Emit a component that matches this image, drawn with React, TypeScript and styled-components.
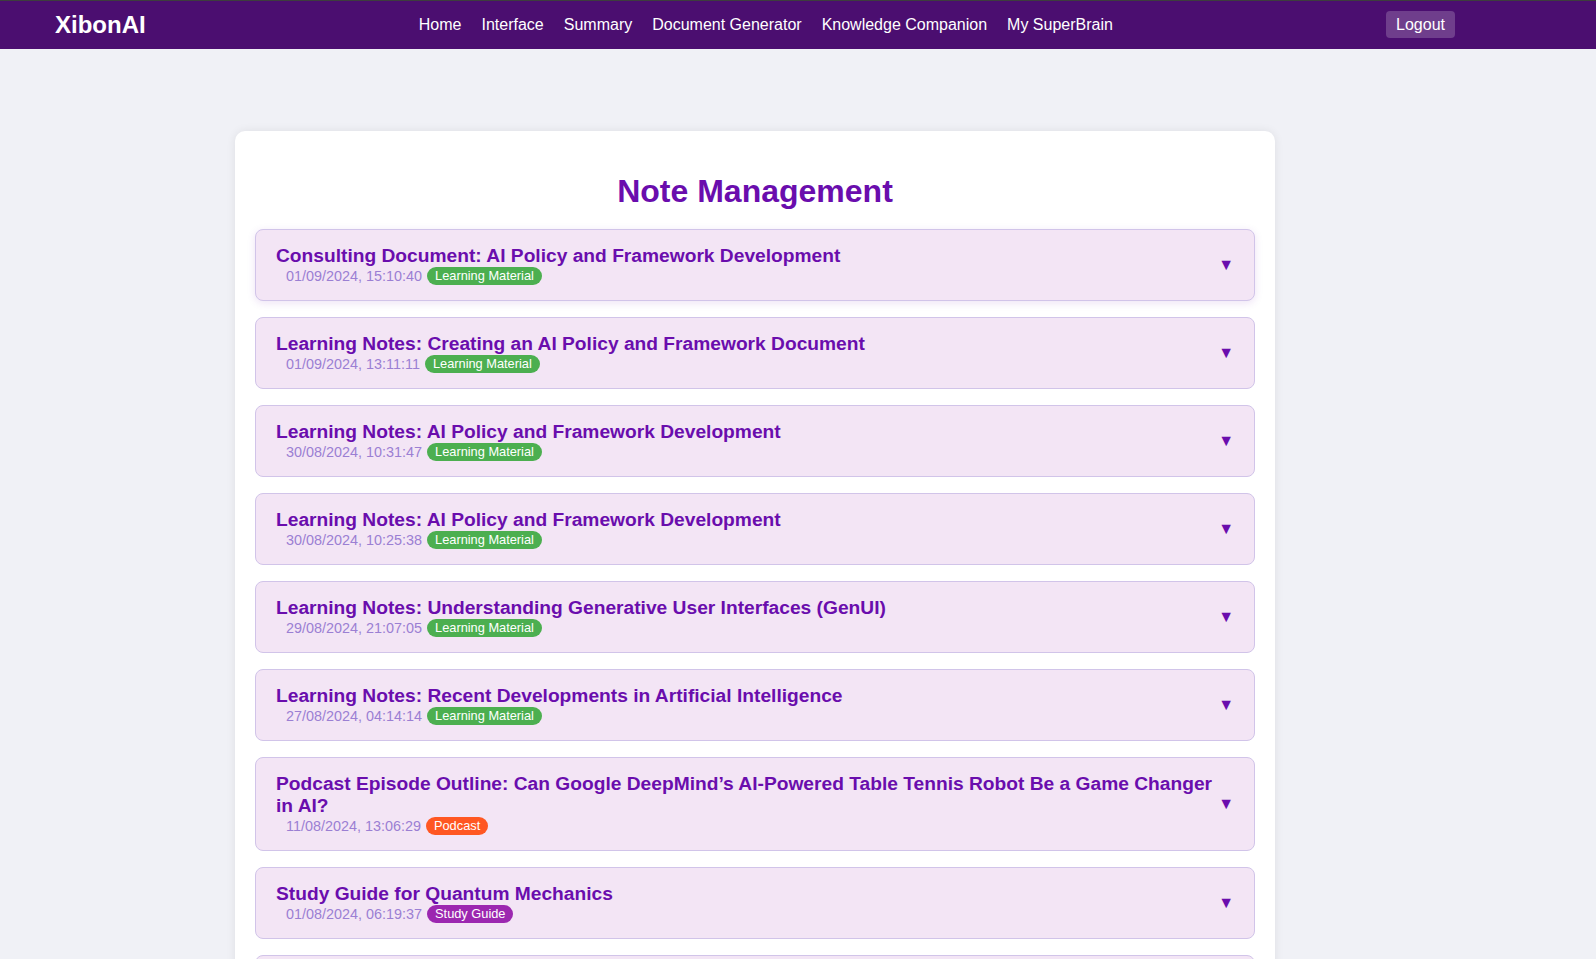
import React from "react";
import styled, { createGlobalStyle } from "styled-components";

const GlobalStyle = createGlobalStyle`
  html, body {
    margin: 0;
    padding: 0;
    background: #f0f1f6;
    font-family: "Liberation Sans", Arial, sans-serif;
  }
  * { box-sizing: border-box; }
`;

const NavBar = styled.nav`
  height: 49px;
  border-top: 1px solid #3d3d3d;
  background: #4b0e70;
  display: flex;
  align-items: center;
  justify-content: space-between;
  padding: 0 141px 0 55px;
`;

const Logo = styled.div`
  color: #ffffff;
  font-size: 24px;
  font-weight: bold;
`;

const Links = styled.div`
  display: flex;
  gap: 20px;
`;

const NavLink = styled.a`
  color: #ffffff;
  font-size: 16px;
  text-decoration: none;
  cursor: pointer;
`;

const LogoutButton = styled.button`
  background: rgba(255, 255, 255, 0.2);
  color: #ffffff;
  border: none;
  border-radius: 4px;
  font-family: "Liberation Sans", Arial, sans-serif;
  font-size: 16px;
  padding: 4px 10px;
  height: 27px;
  margin-top: -1px;
  cursor: pointer;
`;

const Main = styled.main`
  padding: 82px 0 0 235px;
`;

const Card = styled.section`
  width: 1040px;
  background: #ffffff;
  border-radius: 10px;
  box-shadow: 0 0 10px rgba(0, 0, 0, 0.08);
  padding: 20px;
`;

const Heading = styled.h1`
  margin: 22px 0 19px;
  text-align: center;
  color: #6a0dad;
  font-size: 32px;
  font-weight: bold;
`;

const NoteList = styled.div`
  display: flex;
  flex-direction: column;
  gap: 16px;
`;

const NoteItem = styled.div<{ $hovered?: boolean }>`
  background: #f3e5f5;
  border: 1px solid #d1c4e9;
  border-radius: 8px;
  padding: 15px 20px;
  display: flex;
  align-items: center;
  justify-content: space-between;
  box-shadow: ${(p) => (p.$hovered ? "0 2px 8px rgba(106, 13, 173, 0.12)" : "none")};
  cursor: pointer;
`;

const NoteInfo = styled.div`
  display: flex;
  flex-direction: column;
  flex: 1;
  min-width: 0;
`;

const NoteTitle = styled.h3`
  margin: 0;
  color: #6a0dad;
  font-size: 19.2px;
  font-weight: bold;
  line-height: 22px;
`;

const Meta = styled.div`
  display: flex;
  align-items: center;
  gap: 5px;
  margin-left: 10px;
  height: 18px;
`;

const DateText = styled.span`
  color: #9b7fd3;
  font-size: 14.4px;
`;

const Badge = styled.span<{ $color: string }>`
  background: ${(p) => p.$color};
  color: #ffffff;
  font-size: 12.8px;
  line-height: 14px;
  padding: 2px 8px;
  border-radius: 10px;
`;

const Arrow = styled.span`
  color: #6a0dad;
  font-size: 16px;
  flex-shrink: 0;
  margin-left: 6px;
`;

const tagColors: Record<string, string> = {
  "Learning Material": "#4caf50",
  Podcast: "#ff5722",
  "Study Guide": "#9c27b0",
};

const notes = [
  { title: "Consulting Document: AI Policy and Framework Development", date: "01/09/2024, 15:10:40", tag: "Learning Material" },
  { title: "Learning Notes: Creating an AI Policy and Framework Document", date: "01/09/2024, 13:11:11", tag: "Learning Material" },
  { title: "Learning Notes: AI Policy and Framework Development", date: "30/08/2024, 10:31:47", tag: "Learning Material" },
  { title: "Learning Notes: AI Policy and Framework Development", date: "30/08/2024, 10:25:38", tag: "Learning Material" },
  { title: "Learning Notes: Understanding Generative User Interfaces (GenUI)", date: "29/08/2024, 21:07:05", tag: "Learning Material" },
  { title: "Learning Notes: Recent Developments in Artificial Intelligence", date: "27/08/2024, 04:14:14", tag: "Learning Material" },
  { title: "Podcast Episode Outline: Can Google DeepMind\u2019s AI-Powered Table Tennis Robot Be a Game Changer in AI?", date: "11/08/2024, 13:06:29", tag: "Podcast" },
  { title: "Study Guide for Quantum Mechanics", date: "01/08/2024, 06:19:37", tag: "Study Guide" },
  { title: "Learning Notes: Introduction to Machine Learning", date: "28/07/2024, 09:12:44", tag: "Learning Material" },
];

export default function App() {
  return (
    <>
      <GlobalStyle />
      <NavBar>
        <Logo>XibonAI</Logo>
        <Links>
          {["Home", "Interface", "Summary", "Document Generator", "Knowledge Companion", "My SuperBrain"].map((l) => (
            <NavLink key={l}>{l}</NavLink>
          ))}
        </Links>
        <LogoutButton>Logout</LogoutButton>
      </NavBar>
      <Main>
        <Card>
          <Heading>Note Management</Heading>
          <NoteList>
            {notes.map((n, i) => (
              <NoteItem key={i} $hovered={i === 0}>
                <NoteInfo>
                  <NoteTitle>{n.title}</NoteTitle>
                  <Meta>
                    <DateText>{n.date}</DateText>
                    <Badge $color={tagColors[n.tag]}>{n.tag}</Badge>
                  </Meta>
                </NoteInfo>
                <Arrow>▼</Arrow>
              </NoteItem>
            ))}
          </NoteList>
        </Card>
      </Main>
    </>
  );
}
